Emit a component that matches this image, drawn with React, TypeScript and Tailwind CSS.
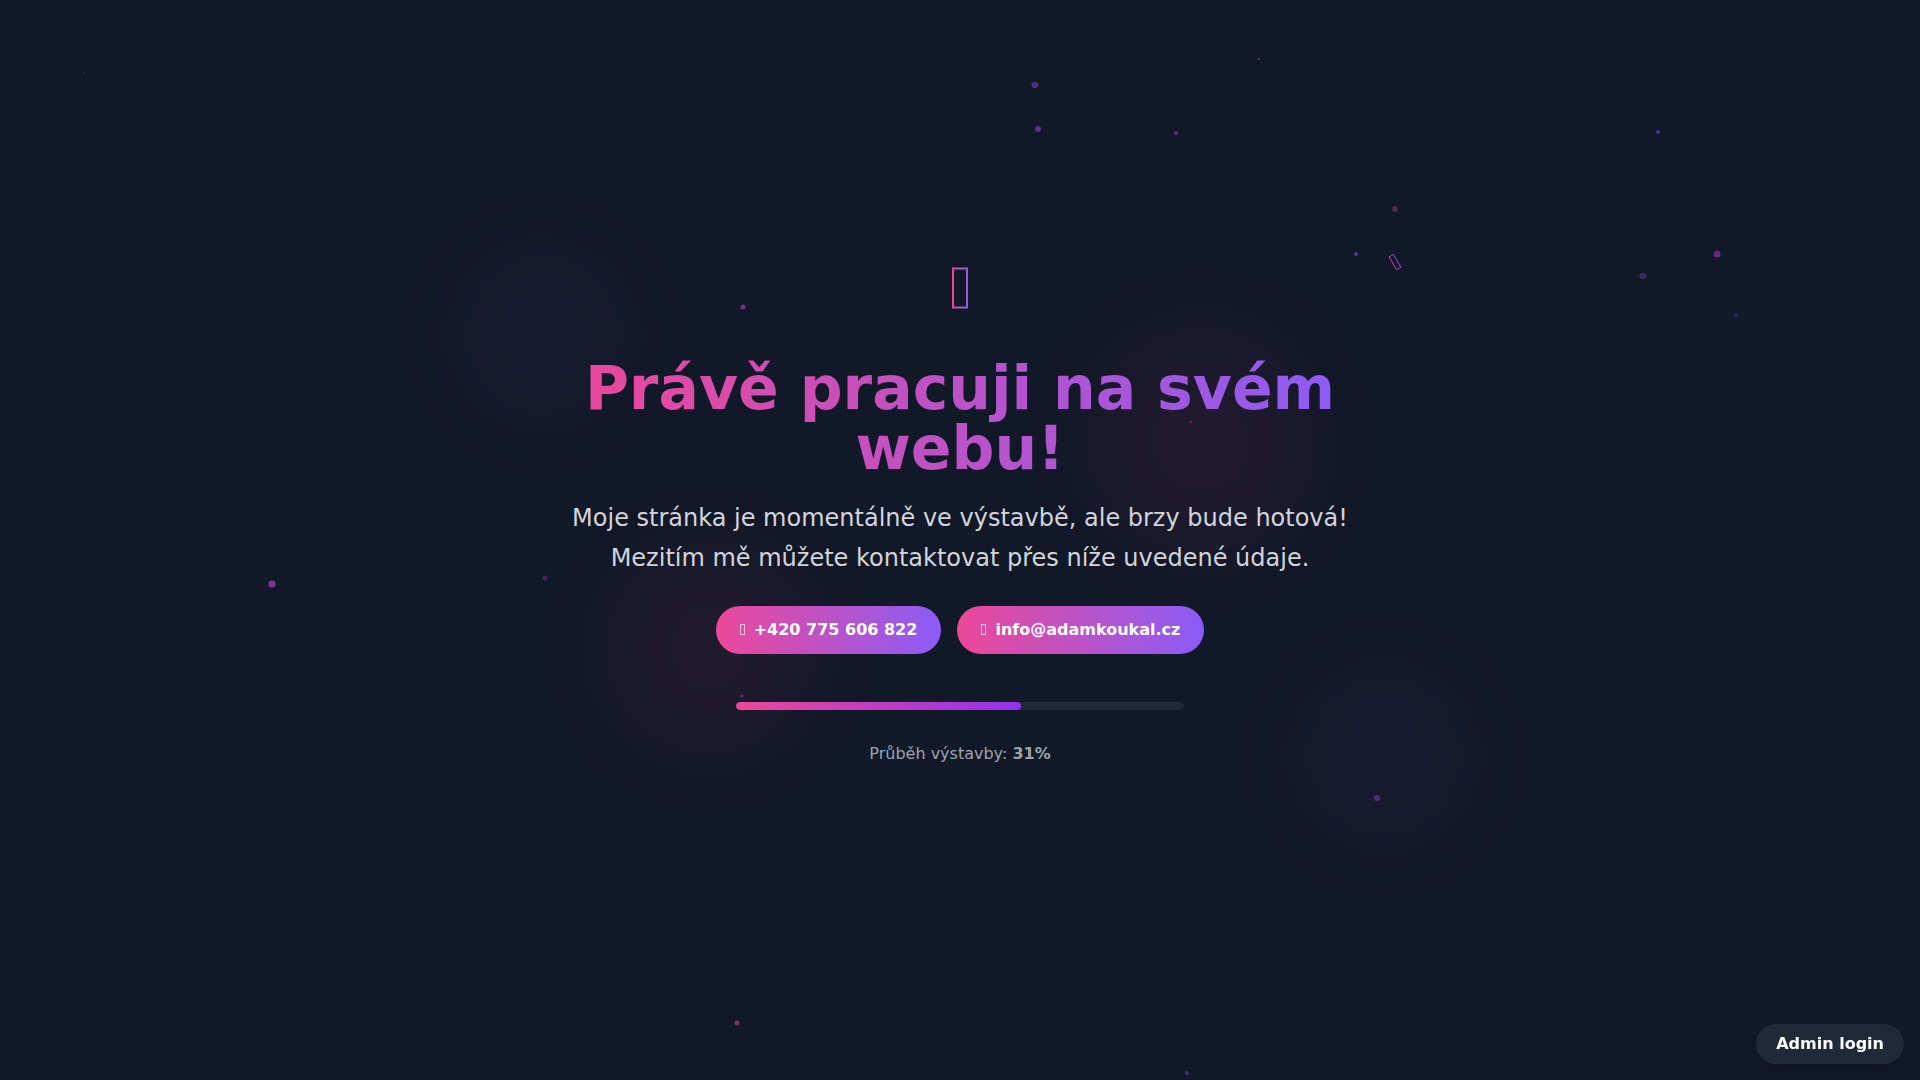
interface Particle {
    x: number;
    y: number;
    w: number;
    h: number;
    color: string;
}

// Positions on a 1920x1080 canvas
const particles: Particle[] = [
    { x: 84, y: 73, w: 2, h: 2, color: "#33284a" },
    { x: 1035, y: 85, w: 7, h: 6, color: "#4f2f80" },
    { x: 1038, y: 129, w: 6, h: 6, color: "#5a328f" },
    { x: 1176, y: 133, w: 4, h: 4, color: "#6b2a78" },
    { x: 1259, y: 59, w: 2, h: 2, color: "#6b2f80" },
    { x: 1658, y: 132, w: 4, h: 4, color: "#4d3592" },
    { x: 1395, y: 209, w: 5, h: 6, color: "#5a284f" },
    { x: 1356, y: 254, w: 4, h: 4, color: "#56389f" },
    { x: 1717, y: 254, w: 7, h: 7, color: "#66297c" },
    { x: 1643, y: 276, w: 7, h: 6, color: "#382a68" },
    { x: 1736, y: 315, w: 3, h: 3, color: "#41307a" },
    { x: 743, y: 307, w: 5, h: 5, color: "#7a2f94" },
    { x: 1191, y: 422, w: 3, h: 3, color: "#55254a" },
    { x: 272, y: 584, w: 7, h: 7, color: "#85309f" },
    { x: 545, y: 578, w: 5, h: 5, color: "#4a235f" },
    { x: 742, y: 696, w: 3, h: 3, color: "#573080" },
    { x: 1377, y: 798, w: 6, h: 6, color: "#4d2d78" },
    { x: 737, y: 1023, w: 5, h: 5, color: "#83306a" },
    { x: 1187, y: 1073, w: 4, h: 4, color: "#4a3080" },
];

const Particles = () => (
    <div className="absolute inset-0">
        {particles.map((p) => (
            <span
                key={`${p.x}-${p.y}`}
                className="absolute -translate-1/2 rounded-full"
                style={{
                    left: `${(p.x / 1920) * 100}%`,
                    top: `${(p.y / 1080) * 100}%`,
                    width: p.w,
                    height: p.h,
                    backgroundColor: p.color,
                }}
            />
        ))}
    </div>
);

const Blobs = () => (
    <div className="absolute inset-0">
        <div className="absolute left-[28.3%] top-[31%] size-48 -translate-1/2 rounded-full bg-violet-500/4 blur-[40px]" />
        <div className="absolute left-[62.6%] top-[40.8%] size-54 -translate-1/2 rounded-full bg-pink-500/7 blur-[40px]" />
        <div className="absolute left-[37%] top-[60%] size-50 -translate-1/2 rounded-full bg-pink-500/7 blur-[40px]" />
        <div className="absolute left-[72.1%] top-[70%] size-48 -translate-1/2 rounded-full bg-violet-500/4 blur-[40px]" />
    </div>
);

// Tall outlined box with the brand gradient
const GradientBox = () => (
    <svg className="h-[42px] w-4" viewBox="0 0 16 42" fill="none" aria-hidden="true">
        <defs>
            <linearGradient id="box-large" gradientUnits="userSpaceOnUse" x1="0" y1="0" x2="16" y2="0">
                <stop stopColor="#ec4899" />
                <stop offset="1" stopColor="#8b5cf6" />
            </linearGradient>
        </defs>
        <rect x="1" y="1.5" width="14" height="39" stroke="url(#box-large)" strokeWidth="2" />
    </svg>
);

const TiltedBox = () => (
    <svg
        className="absolute left-[72.65%] top-[24.3%] h-4 w-2 -translate-1/2 -rotate-30"
        viewBox="0 0 8 16"
        fill="none"
        aria-hidden="true"
    >
        <defs>
            <linearGradient id="box-small" gradientUnits="userSpaceOnUse" x1="1" y1="0" x2="7" y2="0">
                <stop stopColor="#ec4899" />
                <stop offset="1" stopColor="#8b5cf6" />
            </linearGradient>
        </defs>
        <rect x="1.5" y="0.5" width="5" height="15" stroke="url(#box-small)" strokeWidth="0.8" />
    </svg>
);

interface ContactLinkProps {
    href: string;
    label: string;
}

const ContactLink = ({ href, label }: ContactLinkProps) => (
    <a
        href={href}
        className="flex items-center gap-2 rounded-full bg-linear-to-r/srgb from-[#ec4899] to-[#8b5cf6] px-6 py-3 font-semibold text-white"
    >
        <svg className="h-3 w-1.5" viewBox="0 0 6 12" fill="none" aria-hidden="true">
            <rect x="0.5" y="0.5" width="4" height="10" stroke="currentColor" strokeOpacity="0.65" />
        </svg>
        {label}
    </a>
);

const App = () => {
    const progress = 31;

    return (
        <main className="relative flex min-h-screen flex-col items-center justify-center overflow-hidden bg-[#111827] px-4 pb-14 font-['DejaVu_Sans',sans-serif] text-white">
            <Blobs />
            <Particles />

            <div className="relative w-full max-w-[800px] text-center">
                {/* Icon */}
                <div className="mb-10 flex h-15 items-center justify-center">
                    <GradientBox />
                </div>

                <h1 className="mb-6 bg-linear-to-r/srgb from-[#ec4899] to-[#8b5cf6] bg-clip-text text-6xl leading-none font-bold text-transparent">
                    Právě pracuji na svém webu!
                </h1>

                <div className="mb-8 space-y-2 text-2xl leading-8 text-[#d1d5db]">
                    <p>Moje stránka je momentálně ve výstavbě, ale brzy bude hotová!</p>
                    <p>Mezitím mě můžete kontaktovat přes níže uvedené údaje.</p>
                </div>

                {/* Contact */}
                <div className="mb-12 flex flex-wrap justify-center gap-4">
                    <ContactLink href="tel:+420775606822" label="+420 775 606 822" />
                    <ContactLink href="mailto:info@adamkoukal.cz" label="info@adamkoukal.cz" />
                </div>

                {/* Progress */}
                <div className="mx-auto mb-8 h-2 max-w-md overflow-hidden rounded-full bg-[#1f2937]">
                    <div className="h-full w-7/11 rounded-full bg-linear-to-r/srgb from-[#ec4899] to-[#9333ea]" />
                </div>
                <p className="text-[#9ca3af]">
                    Průběh výstavby: <strong className="font-bold">{progress}%</strong>
                </p>
            </div>

            <TiltedBox />

            <button
                type="button"
                className="fixed right-4 bottom-4 rounded-full bg-[#1f2937] px-5 py-2 font-semibold text-white shadow-lg"
            >
                Admin login
            </button>
        </main>
    );
};

export default App;
